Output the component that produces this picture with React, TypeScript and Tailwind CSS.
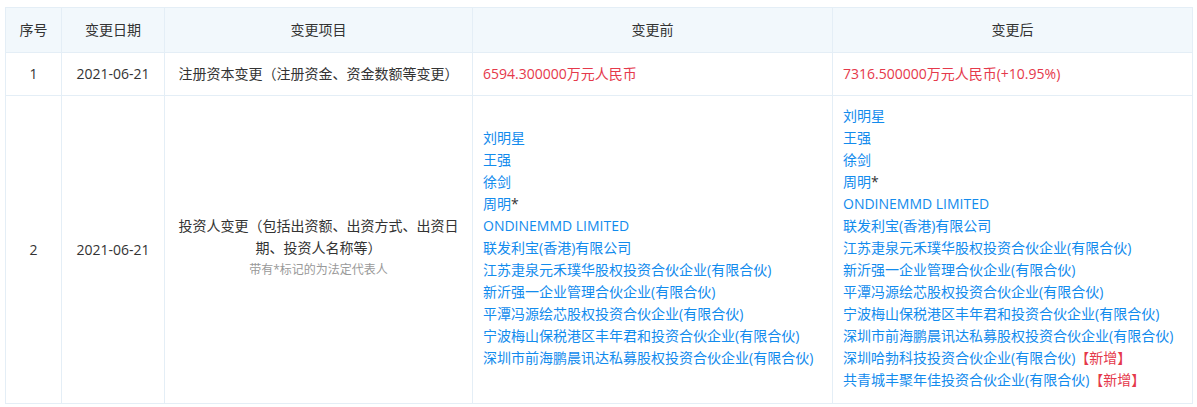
import React from "react";

type Person = { name: string; legal?: boolean; isNew?: boolean };

const before: Person[] = [
  { name: "刘明星" },
  { name: "王强" },
  { name: "徐剑" },
  { name: "周明", legal: true },
  { name: "ONDINEMMD LIMITED" },
  { name: "联发利宝(香港)有限公司" },
  { name: "江苏疌泉元禾璞华股权投资合伙企业(有限合伙)" },
  { name: "新沂强一企业管理合伙企业(有限合伙)" },
  { name: "平潭冯源绘芯股权投资合伙企业(有限合伙)" },
  { name: "宁波梅山保税港区丰年君和投资合伙企业(有限合伙)" },
  { name: "深圳市前海鹏晨讯达私募股权投资合伙企业(有限合伙)" },
];

const after: Person[] = [
  ...before,
  { name: "深圳哈勃科技投资合伙企业(有限合伙)", isNew: true },
  { name: "共青城丰聚年佳投资合伙企业(有限合伙)", isNew: true },
];

const PersonList = ({ items }: { items: Person[] }) => (
  <div className="leading-[22px]">
    {items.map((p) => (
      <div key={p.name}>
        <span className="text-[#128bed]">{p.name}</span>
        {p.legal && <span className="text-[#333]">*</span>}
        {p.isNew && <span className="text-[#e5394b]">【新增】</span>}
      </div>
    ))}
  </div>
);

const th = "border border-[#e4eef6] font-normal text-[#333] text-center pb-[1px]";
const td = "border border-[#e4eef6] text-[#333]";

export default function App() {
  return (
    <div
      className="bg-white pt-[7px] pl-[5px] text-[14px] [font-kerning:none] [text-spacing-trim:space-all]"
      style={{ fontFamily: '"Open Sans", "Noto Sans CJK SC", sans-serif' }}
    >
      <table className="border-collapse table-fixed w-[1187px]">
        <thead>
          <tr className="h-[45px] bg-[#f2f8fc]">
            <th className={`${th} w-[56px]`}>序号</th>
            <th className={`${th} w-[103px]`}>变更日期</th>
            <th className={`${th} w-[308px]`}>变更项目</th>
            <th className={`${th} w-[360px]`}>变更前</th>
            <th className={`${th} w-[360px]`}>变更后</th>
          </tr>
        </thead>
        <tbody>
          <tr className="h-[43px]">
            <td className={`${td} text-center pb-[1px]`}>1</td>
            <td className={`${td} text-center pb-[1px]`}>2021-06-21</td>
            <td className={`${td} text-center px-[10px] pb-[1px]`}>
              注册资本变更（注册资金、资金数额等变更）
            </td>
            <td className={`${td} px-[10px] pb-[1px] text-[#e5394b]`}>
              6594.300000万元人民币
            </td>
            <td className={`${td} px-[10px] pb-[1px] text-[#e5394b]`}>
              7316.500000万元人民币(+10.95%)
            </td>
          </tr>
          <tr>
            <td className={`${td} text-center`}>2</td>
            <td className={`${td} text-center`}>2021-06-21</td>
            <td className={`${td} text-center px-[10px] leading-[22px] pb-[3px]`}>
              投资人变更（包括出资额、出资方式、出资日期、投资人名称等）
              <div className="text-[12px] text-[#999]">带有*标记的为法定代表人</div>
            </td>
            <td className={`${td} px-[10px] pt-[9px] pb-[12px]`}>
              <PersonList items={before} />
            </td>
            <td className={`${td} px-[10px] pt-[9px] pb-[12px]`}>
              <PersonList items={after} />
            </td>
          </tr>
        </tbody>
      </table>
    </div>
  );
}
